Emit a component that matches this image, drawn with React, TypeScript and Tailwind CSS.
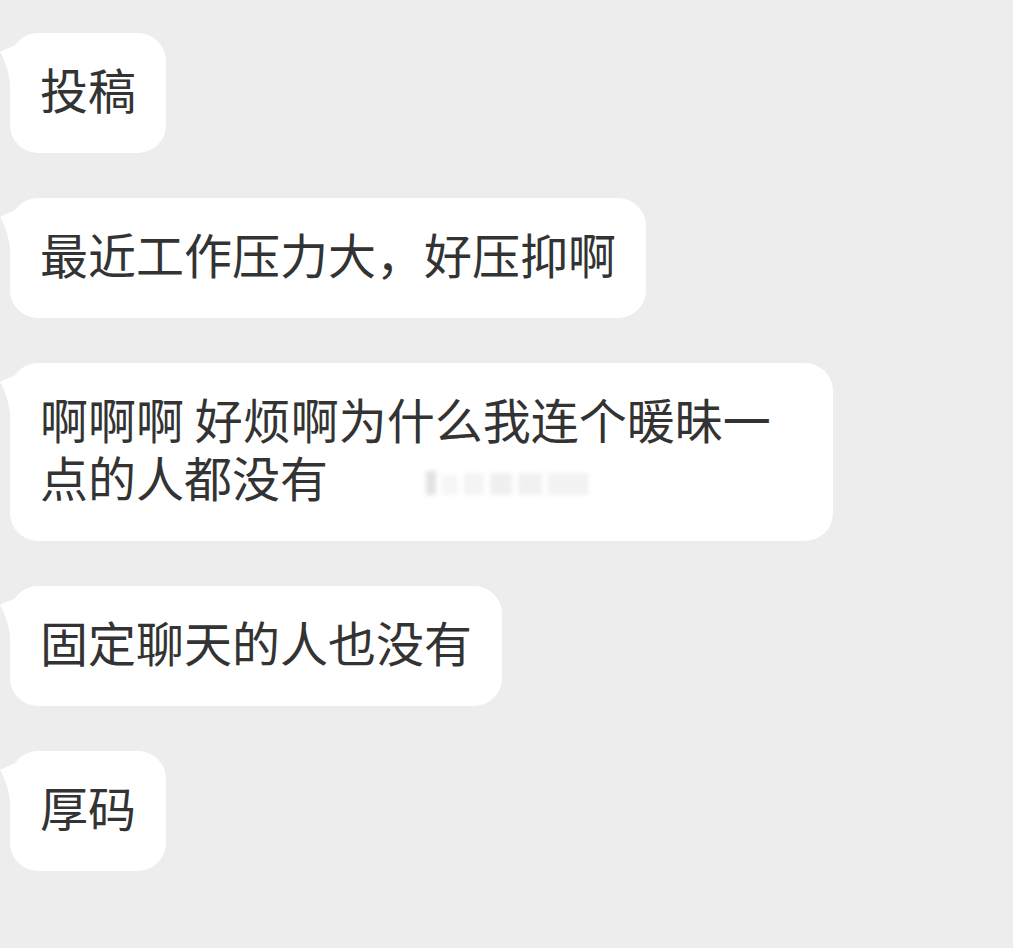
import React from "react";

function Tail() {
  return (
    <svg
      className="absolute left-[-10px] top-[10px]"
      width="24"
      height="48"
      viewBox="0 0 24 48"
      fill="#ffffff"
    >
      <path d="M24 0 C14 2 6 6 0 9 C3 14 8 24 10 40 L24 40 Z" />
    </svg>
  );
}

function Bubble({ children }: { children: React.ReactNode }) {
  return (
    <div className="relative ml-[10px] w-fit max-w-[823px] rounded-[28px] bg-white px-[30px] pt-[26px] pb-[36px] text-[48px] leading-[58px] text-[#333333]">
      <Tail />
      <div className="relative">{children}</div>
    </div>
  );
}

export default function App() {
  return (
    <div
      className="min-h-[948px] w-full bg-[#ededed] pt-[33px]"
      style={{ fontFamily: '"Noto Sans CJK SC", "Noto Sans", sans-serif' }}
    >
      <div className="flex flex-col gap-[45px]">
        <Bubble>投稿</Bubble>
        <Bubble>最近工作压力大，好压抑啊</Bubble>
        <Bubble>
          啊啊啊 好烦啊为什么我连个暖昧一点的人都没有
          <span className="ml-[98px] inline-flex h-[26px] w-[170px] items-end gap-[6px] align-[2px] blur-[2px]">
            <span className="h-[24px] w-[10px] bg-[#e2e2e2]" />
            <span className="h-[20px] w-[16px] bg-[#f6f6f6]" />
            <span className="h-[22px] w-[20px] bg-[#f4f4f4]" />
            <span className="h-[22px] w-[22px] bg-[#f0f0f0]" />
            <span className="h-[22px] w-[24px] bg-[#f1f1f1]" />
            <span className="h-[22px] w-[40px] bg-[#f2f2f2]" />
          </span>
        </Bubble>
        <Bubble>固定聊天的人也没有</Bubble>
        <Bubble>厚码</Bubble>
      </div>
    </div>
  );
}
